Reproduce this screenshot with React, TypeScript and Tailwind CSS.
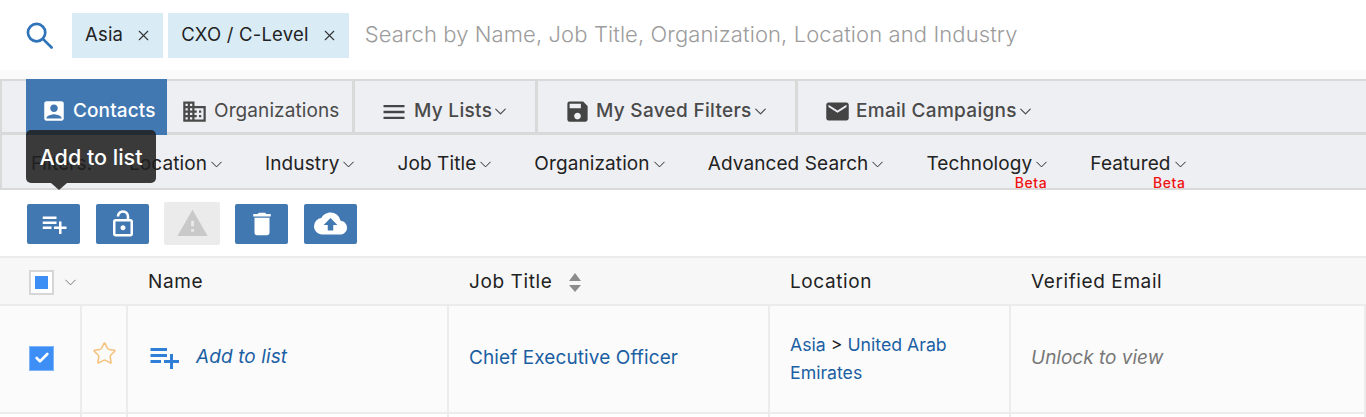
import { Check, ChevronDown, Star, X } from 'lucide-react';
import {
    MdAccountBox,
    MdCloudUpload,
    MdDelete,
    MdDomain,
    MdEmail,
    MdMenu,
    MdOutlineLockOpen,
    MdPlaylistAdd,
    MdSave,
    MdWarning,
} from 'react-icons/md';
import type { ReactNode } from 'react';

const filters = [
    { label: 'Location' },
    { label: 'Industry' },
    { label: 'Job Title' },
    { label: 'Organization' },
    { label: 'Advanced Search' },
    { label: 'Technology', beta: true },
    { label: 'Featured', beta: true },
];

function Chip({ label }: { label: string }) {
    return (
        <div className="h-[45px] bg-[#d9ecf6] flex items-center pl-[13px] pr-[11px] gap-[12px] text-[18.5px] tracking-[0.2px] text-[#222]">
            <span>{label}</span>
            <X className="w-[17px] h-[17px] text-[#333]" strokeWidth={1.5} />
        </div>
    );
}

function Tab({ icon, label, className }: { icon: ReactNode; label: string; className: string }) {
    return (
        <div className={`h-full flex items-center shrink-0 pt-[10px] border-r-[3px] border-[#d9d9d9] text-[19px] tracking-[0.3px] font-medium text-[#4a4a4a] ${className}`}>
            {icon}
            <span>{label}</span>
            <ChevronDown className="w-[19px] h-[19px] -ml-[1px]" strokeWidth={1.5} />
        </div>
    );
}

function ActionButton({ children }: { children: ReactNode }) {
    return (
        <button className="w-[53px] h-[40px] bg-[#4278b2] rounded-[2px] flex items-center justify-center text-white">
            {children}
        </button>
    );
}

export default function App() {
    return (
        <div className="w-[1366px] h-[417px] overflow-hidden bg-white relative" style={{ fontFamily: 'Inter, "Liberation Sans", sans-serif' }}>
            <div className="h-[70px] flex items-center pl-[26px]">
                <svg viewBox="0 0 28 28" className="w-[27px] h-[27px] mr-[19px]" fill="none" stroke="#2f74b8" strokeWidth="2.8" strokeLinecap="round">
                    <circle cx="11" cy="11" r="9" />
                    <path d="M17.5 17.5 L26.5 26.5" />
                </svg>
                <div className="flex gap-[5px] mr-[16px]">
                    <Chip label="Asia" />
                    <Chip label="CXO / C-Level" />
                </div>
                <span className="text-[22px] tracking-[0.1px] font-light text-[#9c9c9c] pb-[2px]">Search by Name, Job Title, Organization, Location and Industry</span>
            </div>
            <div className="h-[9px] bg-[#fbfbfb]" />

            <div className="h-[56px] bg-[#eeeff3] border-t-2 border-b-[3px] border-l-2 border-[#d9d9d9] flex pl-[24px]">
                <div className="w-[141px] -mt-[2px] -mb-[3px] pt-[8px] bg-[#4278b2] text-white flex items-center pl-[15px] gap-[6px] text-[19px] tracking-[0.1px] font-medium shrink-0">
                    <MdAccountBox className="w-[26px] h-[26px]" />
                    Contacts
                </div>
                <div className="w-[188px] h-full flex items-center pt-[10px] pl-[14px] gap-[6px] text-[19px] tracking-[0.1px] text-[#4a4a4a] border-r-[3px] border-[#d9d9d9] shrink-0">
                    <MdDomain className="w-[27px] h-[27px]" />
                    Organizations
                </div>
                <Tab className="w-[183px] pl-[25px]" icon={<MdMenu className="w-[28px] h-[28px] mr-[6px] text-[#444]" />} label="My Lists" />
                <Tab className="w-[260px] pl-[26px]" icon={<MdSave className="w-[27px] h-[27px] mr-[5px] text-[#444]" />} label="My Saved Filters" />
                <div className="h-full flex items-center pt-[10px] pl-[26px] text-[19px] tracking-[0.3px] font-medium text-[#4a4a4a]">
                    <MdEmail className="w-[27px] h-[27px] mr-[5px] text-[#444]" />
                    <span>Email Campaigns</span>
                    <ChevronDown className="w-[19px] h-[19px] -ml-[1px]" strokeWidth={1.5} />
                </div>
            </div>

            <div className="h-[55px] bg-[#eeeff3] border-b-2 border-l-2 border-[#d9d9d9] flex items-center pl-[29px] pt-[6px] text-[19px] tracking-[0.1px] text-[#222]">
                <span className="w-[98px] shrink-0">Filters:</span>
                <div className="flex items-center gap-[39px]">
                    {filters.map(f => (
                        <div key={f.label} className="relative flex items-center">
                            <span>{f.label}</span>
                            <ChevronDown className="w-[19px] h-[19px]" strokeWidth={1.25} />
                            {f.beta && (
                                <span className="absolute right-[4px] top-[25px] text-[14px] font-medium leading-[16px] tracking-[0.6px] text-[#f01010]">Beta</span>
                            )}
                        </div>
                    ))}
                </div>
            </div>

            <div className="h-[66px] flex items-center pl-[27px] pt-[1px]">
                <div className="flex items-center gap-[16px]">
                    <ActionButton><MdPlaylistAdd className="w-[30px] h-[30px]" /></ActionButton>
                    <ActionButton><MdOutlineLockOpen className="w-[30px] h-[30px]" /></ActionButton>
                    <button className="w-[56px] h-[43px] -mx-[1px] bg-[#ebebeb] rounded-[2px] flex items-center justify-center text-[#c9c9c9]">
                        <MdWarning className="w-[33px] h-[33px]" />
                    </button>
                    <ActionButton><MdDelete className="w-[30px] h-[30px]" /></ActionButton>
                    <ActionButton><MdCloudUpload className="w-[33px] h-[33px]" /></ActionButton>
                </div>
            </div>

            <div className="grid grid-cols-[82px_46px_321px_321px_241px_1fr] h-[50px] bg-[#f7f7f7] border-t-2 border-b-2 border-[#ececec] items-center pt-[2px] text-[19px] tracking-[0.6px] text-[#222]">
                <div className="col-span-2 flex items-center pl-[29px]">
                    <div className="w-[25px] h-[25px] bg-white border-2 border-[#d6d6d6] flex items-center justify-center">
                        <div className="w-[13px] h-[13px] bg-[#3d8ff5]" />
                    </div>
                    <ChevronDown className="w-[19px] h-[19px] ml-[7px] text-[#777]" strokeWidth={1.25} />
                </div>
                <div className="pl-[20px]">Name</div>
                <div className="pl-[20px] flex items-center gap-[17px]">
                    <span>Job Title</span>
                    <div className="flex flex-col items-center gap-[4px]">
                        <div className="w-0 h-0 border-x-[6px] border-x-transparent border-b-[8px] border-b-[#8c8c8c]" />
                        <div className="w-0 h-0 border-x-[6px] border-x-transparent border-t-[7px] border-t-[#8c8c8c]" />
                    </div>
                </div>
                <div className="pl-[20px]">Location</div>
                <div className="pl-[20px]">Verified Email</div>
            </div>

            <div className="grid grid-cols-[82px_46px_321px_321px_241px_1fr] h-[108px] bg-[#fbfbfb] border-b-2 border-r-2 border-[#ececec] items-stretch text-[19px] tracking-[0.1px]">
                <div className="border-r-2 border-[#ececec] flex items-center pl-[29px] pb-[2px]">
                    <div className="w-[25px] h-[25px] bg-[#3d8ff5] border border-[#7db5f8] flex items-center justify-center">
                        <Check className="w-[16px] h-[16px] text-white" strokeWidth={4} />
                    </div>
                </div>
                <div className="border-r-2 border-[#ececec] flex items-center pl-[10px] pb-[11px]">
                    <Star className="w-[25px] h-[25px] text-[#f5c27c]" strokeWidth={1.5} />
                </div>
                <div className="border-r-2 border-[#ececec] flex items-center pl-[18px] pb-[4px] gap-[14px] italic text-[#1b5fa3]">
                    <MdPlaylistAdd className="w-[36px] h-[36px] text-[#2f7fd8]" />
                    <span>Add to list</span>
                </div>
                <div className="border-r-2 border-[#ececec] flex items-center pl-[20px] pb-[1px] text-[#1b5fa3]">Chief Executive Officer</div>
                <div className="border-r-2 border-[#ececec] flex items-center pl-[20px] pr-[30px] pb-[1px] text-[17.7px] tracking-[0px] leading-[28px] text-[#1b5fa3]">
                    <div>
                        Asia <span className="text-[#222]">&gt;</span> United Arab Emirates
                    </div>
                </div>
                <div className="flex items-center pl-[20px] pb-[1px] italic tracking-[0px] text-[#777]">Unlock to view</div>
            </div>

            <div className="grid grid-cols-[82px_46px_321px_321px_241px_1fr] h-[3px]">
                <div className="border-r-2 border-[#ececec]" />
                <div className="border-r-2 border-[#ececec]" />
                <div className="border-r-2 border-[#ececec]" />
                <div className="border-r-2 border-[#ececec]" />
                <div className="border-r-2 border-[#ececec]" />
                <div className="border-r-2 border-[#ececec]" />
            </div>

            <div className="absolute left-[26px] top-[130px] w-[130px] h-[53px] rounded-[5px] bg-[#1f1f1f]/[0.87] flex items-center justify-center pt-[2px] text-[21.5px] font-medium text-white">
                Add to list
                <div className="absolute left-[25px] top-[53px] w-0 h-0 border-x-[8px] border-x-transparent border-t-[7px] border-t-[#3a3a3a]" />
            </div>
        </div>
    );
}
